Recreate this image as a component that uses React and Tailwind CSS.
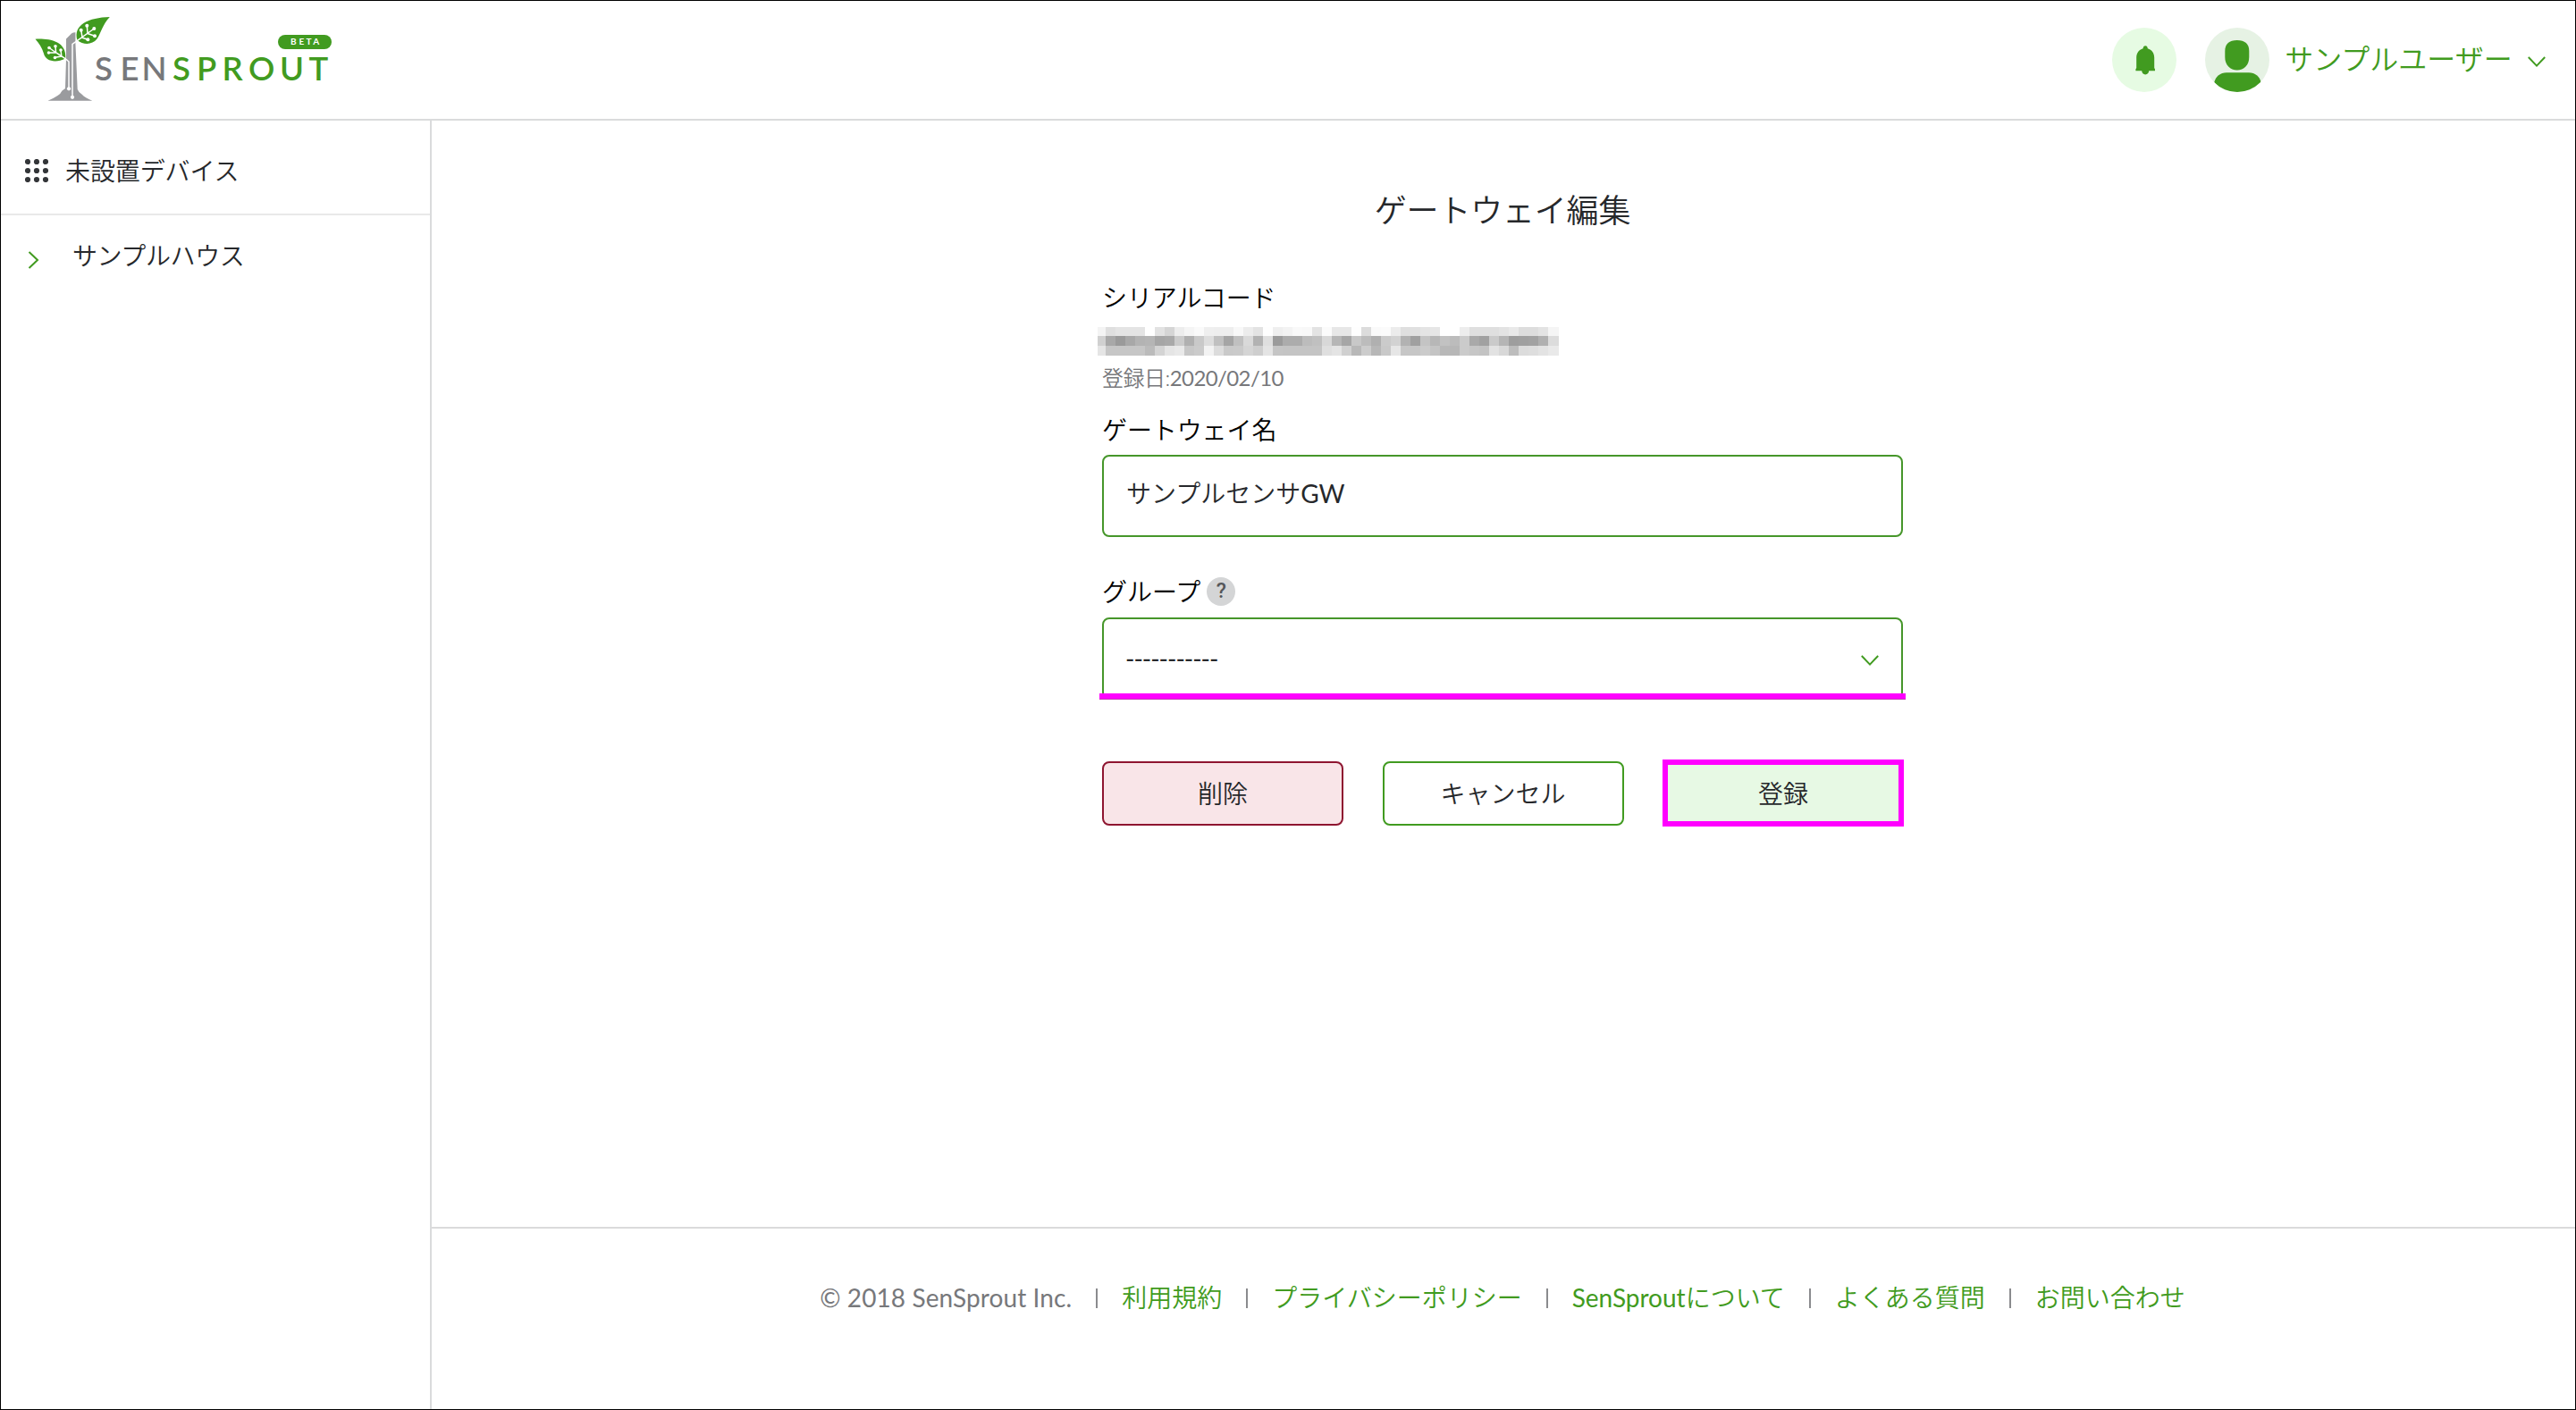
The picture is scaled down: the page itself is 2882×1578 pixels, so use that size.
import clsx from "clsx"

const FOOTER_LINKS = [
  { label: "利用規約" },
  { label: "プライバシーポリシー" },
  { latin: "SenSprout", label: "について" },
  { label: "よくある質問" },
  { label: "お問い合わせ" },
]

// grey levels of the masked serial code, one hex pair per cell
const MASK_ROWS = [
  "f4dfe4e4e4ffe2d5edf5faefeeeef8ece3feeff3f9f8e3fbe7e7fedcfafbecdfe0e4e6ffffeddfdfdfe3e9dddde3f5",
  "d0a89aa8b3b5a6a9cbb0c9ddc0a5c0d9b2df9bacacbcc0d8b6a6c8bcb0cbd2b2a0c4b7c2bccba9a1cab59ea0a2b0dc",
  "e5c6c6c6c6bbd4e5e9c7cbf3dcc9cad5cee4c5c4c4c4c4dfe4d0b8ccb7c9e6c6c6cbc4b8b7cbc6c3e2d8bddcdee3e9",
]

function Logo() {
  return (
    <svg width="360" height="128" viewBox="0 0 360 128" className="mr-auto ml-[18px] font-['Lato',sans-serif]">
      <g transform="translate(-19 -3)">
        <path
          fill="#9a9b9e"
          d="M74 43.5 L80 37.5 Q82 36.2 84.4 36.3 L84.4 48 L86.7 100 Q88 103.5 91.5 105.5 Q95 109.5 103.3 112.8 L53.5 112.8 Q60 110 64.5 107 Q67.5 105.5 69.5 101.5 L73 99 L74 66 Z"
        />
        <path fill="#419b20" d="M39.5 43.7 C53 43 75 45 73.3 65.5 C62 71 51 68.5 49 60 C47 53 43.5 48 39.5 43.7 Z" />
        <path fill="#419b20" d="M122.8 19 C99 19.5 81.5 28 86.5 45 C93.5 50.5 103 50.5 108.5 43.5 C113.5 36 114.5 28 122.8 19 Z" />
        <g stroke="#fff" strokeWidth="1.5" fill="none">
          <path d="M105.3 32 L81 49.5 V108 M92 41.5 L90.7 33.7 M98 37.5 L97.3 28.7 M98 37.5 L106 40.3 M91.5 42 L98.3 44.3" />
          <path d="M55 53.5 L62 58.5 L73 65.5 L77 69 V99 M62 51.7 L62.5 58.5 M68 56 L68.8 63 M54.5 59 L62.5 58.8 M61.5 64.2 L69 63" />
        </g>
        <g fill="#fff">
          <circle cx="90.7" cy="33.7" r="2" />
          <circle cx="97.3" cy="28.7" r="2" />
          <circle cx="105.3" cy="32" r="2" />
          <circle cx="106" cy="40.3" r="2" />
          <circle cx="98.3" cy="44.3" r="2" />
          <circle cx="55" cy="53.5" r="1.8" />
          <circle cx="62" cy="51.7" r="1.8" />
          <circle cx="68" cy="56" r="1.8" />
          <circle cx="54.5" cy="59" r="1.8" />
          <circle cx="61.5" cy="64.5" r="1.8" />
          <circle cx="77" cy="99.3" r="2.1" />
          <circle cx="81" cy="108.8" r="2.1" />
        </g>
        <text y="90" x="106 134.5 158.5" fontSize="36.5" fontWeight="600" fill="#77787b">
          SEN
        </text>
        <text y="90" x="193 220 248.5 278 313 345.5" fontSize="36.5" fontWeight="600" fill="#419b20">
          SPROUT
        </text>
        <rect x="311" y="39" width="60" height="16" rx="8" fill="#419b20" />
        <text y="50.4" x="325 334.5 342.5 350.3" fontSize="10" fontWeight="700" fill="#fff">
          BETA
        </text>
      </g>
    </svg>
  )
}

function BellIcon() {
  return (
    <svg width="72" height="72" viewBox="0 0 72 72" className="rounded-full bg-[#e6fbe3]">
      <path
        fill="#419b20"
        d="M37.2 20.3 C38.8 20.3 39.6 21.4 39.8 23.2 C44.5 24.6 47.2 28.6 47.2 33.5 V45 Q48.4 46.2 48 48.3 H41.2 C41 50.8 39.4 52.4 37.2 52.4 C35 52.4 33.4 50.8 33.2 48.3 H26.4 Q26 46.2 27.2 45 V33.5 C27.2 28.6 29.9 24.6 34.6 23.2 C34.8 21.4 35.6 20.3 37.2 20.3 Z"
      />
    </svg>
  )
}

function AvatarIcon() {
  return (
    <svg width="72" height="72" viewBox="0 0 72 72" className="rounded-full bg-[#e6f2e4]">
      <path
        fill="#419b20"
        d="M35.8 14 C44.5 14 49.3 18 49.3 26 V33 C49.3 42 43.5 47.4 35.8 47.4 C28.1 47.4 22.3 42 22.3 33 V26 C22.3 18 27.1 14 35.8 14 Z"
      />
      <path fill="#419b20" d="M24 50.3 H49 C56 50.3 61 54.5 62.6 61 C56 69 47 72.5 36.4 72.5 C26 72.5 17 69 10.3 61 C12 54.5 17 50.3 24 50.3 Z" />
    </svg>
  )
}

function ChevronDown({ className }) {
  return (
    <svg width="22" height="14" viewBox="0 0 22 14" fill="none" stroke="#419b20" strokeWidth="2" className={className}>
      <path d="M1.8 2 L11 11.6 L20.2 2" />
    </svg>
  )
}

function GridIcon() {
  return (
    <svg width="26" height="26" viewBox="0 0 26 26" fill="#333538">
      {[3, 13, 23].map((y) => [3, 13, 23].map((x) => <circle key={`${x}-${y}`} cx={x} cy={y} r="3.1" />))}
    </svg>
  )
}

function MaskedSerial() {
  return (
    <div className="-ml-[5px] mt-[13px] w-[516px]">
      {MASK_ROWS.map((row, rowIndex) => (
        <div key={rowIndex} className={clsx("flex", rowIndex === 0 ? "h-[10px]" : "h-[11px]")}>
          {row.match(/../g).map((level, index) => (
            <span
              key={index}
              className={clsx("h-full shrink-0", index === 0 ? "w-[9px]" : index === 46 ? "w-[12px]" : "w-[11px]")}
              style={{ backgroundColor: `#${level}${level}${level}` }}
            />
          ))}
        </div>
      ))}
    </div>
  )
}

export default function App() {
  return (
    <div className="flex h-[1578px] w-[2882px] flex-col overflow-hidden border border-black bg-white font-['Lato','Noto_Sans_CJK_JP',sans-serif] text-[28px] font-[350] leading-[40px] text-[#26282b]">
      <header className="flex h-[134px] shrink-0 items-center border-b-2 border-[#dadbdc]">
        <Logo />
        <button className="mr-8">
          <BellIcon />
        </button>
        <button className="flex items-center pr-[32px] text-[32px] text-[#419b20]">
          <AvatarIcon />
          <span className="ml-[15px] w-[259px] whitespace-nowrap pb-[3px]">サンプルユーザー</span>
          <ChevronDown className="ml-[14px] mt-[3px]" />
        </button>
      </header>

      <div className="flex min-h-0 flex-1">
        <aside className="w-[482px] shrink-0 border-r-2 border-[#dadbdc]">
          <div className="flex h-[106px] items-center border-b-2 border-[#e9e9e9] pb-[1px] pl-[27px] pt-[9px]">
            <GridIcon />
            <span className="ml-[19px] tracking-[-0.1px]">未設置デバイス</span>
          </div>
          <div className="flex h-[90px] items-center">
            <svg width="14" height="22" viewBox="0 0 14 22" fill="none" stroke="#419b20" strokeWidth="2" className="ml-[30px] mt-[10px]">
              <path d="M1.5 2 L11 11 L1.5 20" />
            </svg>
            <span className="ml-[36px] tracking-[-0.4px]">サンプルハウス</span>
          </div>
        </aside>

        <div className="flex flex-1 flex-col pr-[2px]">
          <main className="mx-auto w-[896px] flex-1">
            <h1 className="mt-[74px] text-center text-[36px] leading-[52px] tracking-[-0.2px]">ゲートウェイ編集</h1>

            <div className="mt-[52px] tracking-[-0.1px] text-black">シリアルコード</div>
            <MaskedSerial />
            <div className="mt-[5px] text-[24px] tracking-[-0.5px] text-[#77787b]">
              登録日:<span className="font-normal tracking-[-0.6px]">2020/02/10</span>
            </div>

            <div className="mt-[18px] tracking-[-0.1px] text-black">ゲートウェイ名</div>
            <div className="mt-[8px] flex h-[92px] items-center rounded-lg border-2 border-[#46962a] px-[25px] pb-[6px]">
              サンプルセンサ<span className="font-normal">GW</span>
            </div>

            <div className="mt-[41px] flex items-center text-black">
              グループ
              <span className="ml-[7px] flex h-8 w-8 items-center justify-center rounded-full bg-[#d4d5d6] font-['Roboto',sans-serif] text-[23px] font-medium text-[#55575a]">
                ?
              </span>
            </div>
            <div className="relative mt-[9px] flex h-[92px] items-center justify-between rounded-lg border-2 border-[#46962a] pl-[24px] pr-[24px]">
              <span className="font-normal tracking-[-1px]">-----------</span>
              <ChevronDown className="mt-[3px]" />
              <div className="absolute -left-[5px] bottom-[-2px] h-[7px] w-[902px] border-b border-[#c238b4] bg-[#ff00ff]" />
            </div>

            <div className="mt-[69px] flex justify-between">
              <button className="h-[72px] w-[270px] rounded-lg border-2 border-[#8e1530] bg-[#f9e5e8]">削除</button>
              <button className="h-[72px] w-[270px] rounded-lg border-2 border-[#419b20] bg-white">キャンセル</button>
              <button className="-mr-px -mt-[2px] h-[75px] w-[270px] border-[6px] border-[#ff00ff] bg-[#e7f9e4]">登録</button>
            </div>
          </main>

          <footer className="-mr-[2px] flex h-[204px] shrink-0 justify-center border-t-2 border-[#dadadb] pr-[2px] pt-[57px] text-[#77787b]">
            <span className="font-normal tracking-[0.1px]">© 2018 SenSprout Inc.</span>
            {FOOTER_LINKS.map(({ latin, label }) => (
              <span key={label} className="flex">
                <span className="mx-[27px] mt-[10px] h-[22px] w-[2px] bg-[#8a8b8e]" />
                <a className="text-[#419b20]">
                  {latin && <span className="font-normal">{latin}</span>}
                  {label}
                </a>
              </span>
            ))}
          </footer>
        </div>
      </div>
    </div>
  )
}
